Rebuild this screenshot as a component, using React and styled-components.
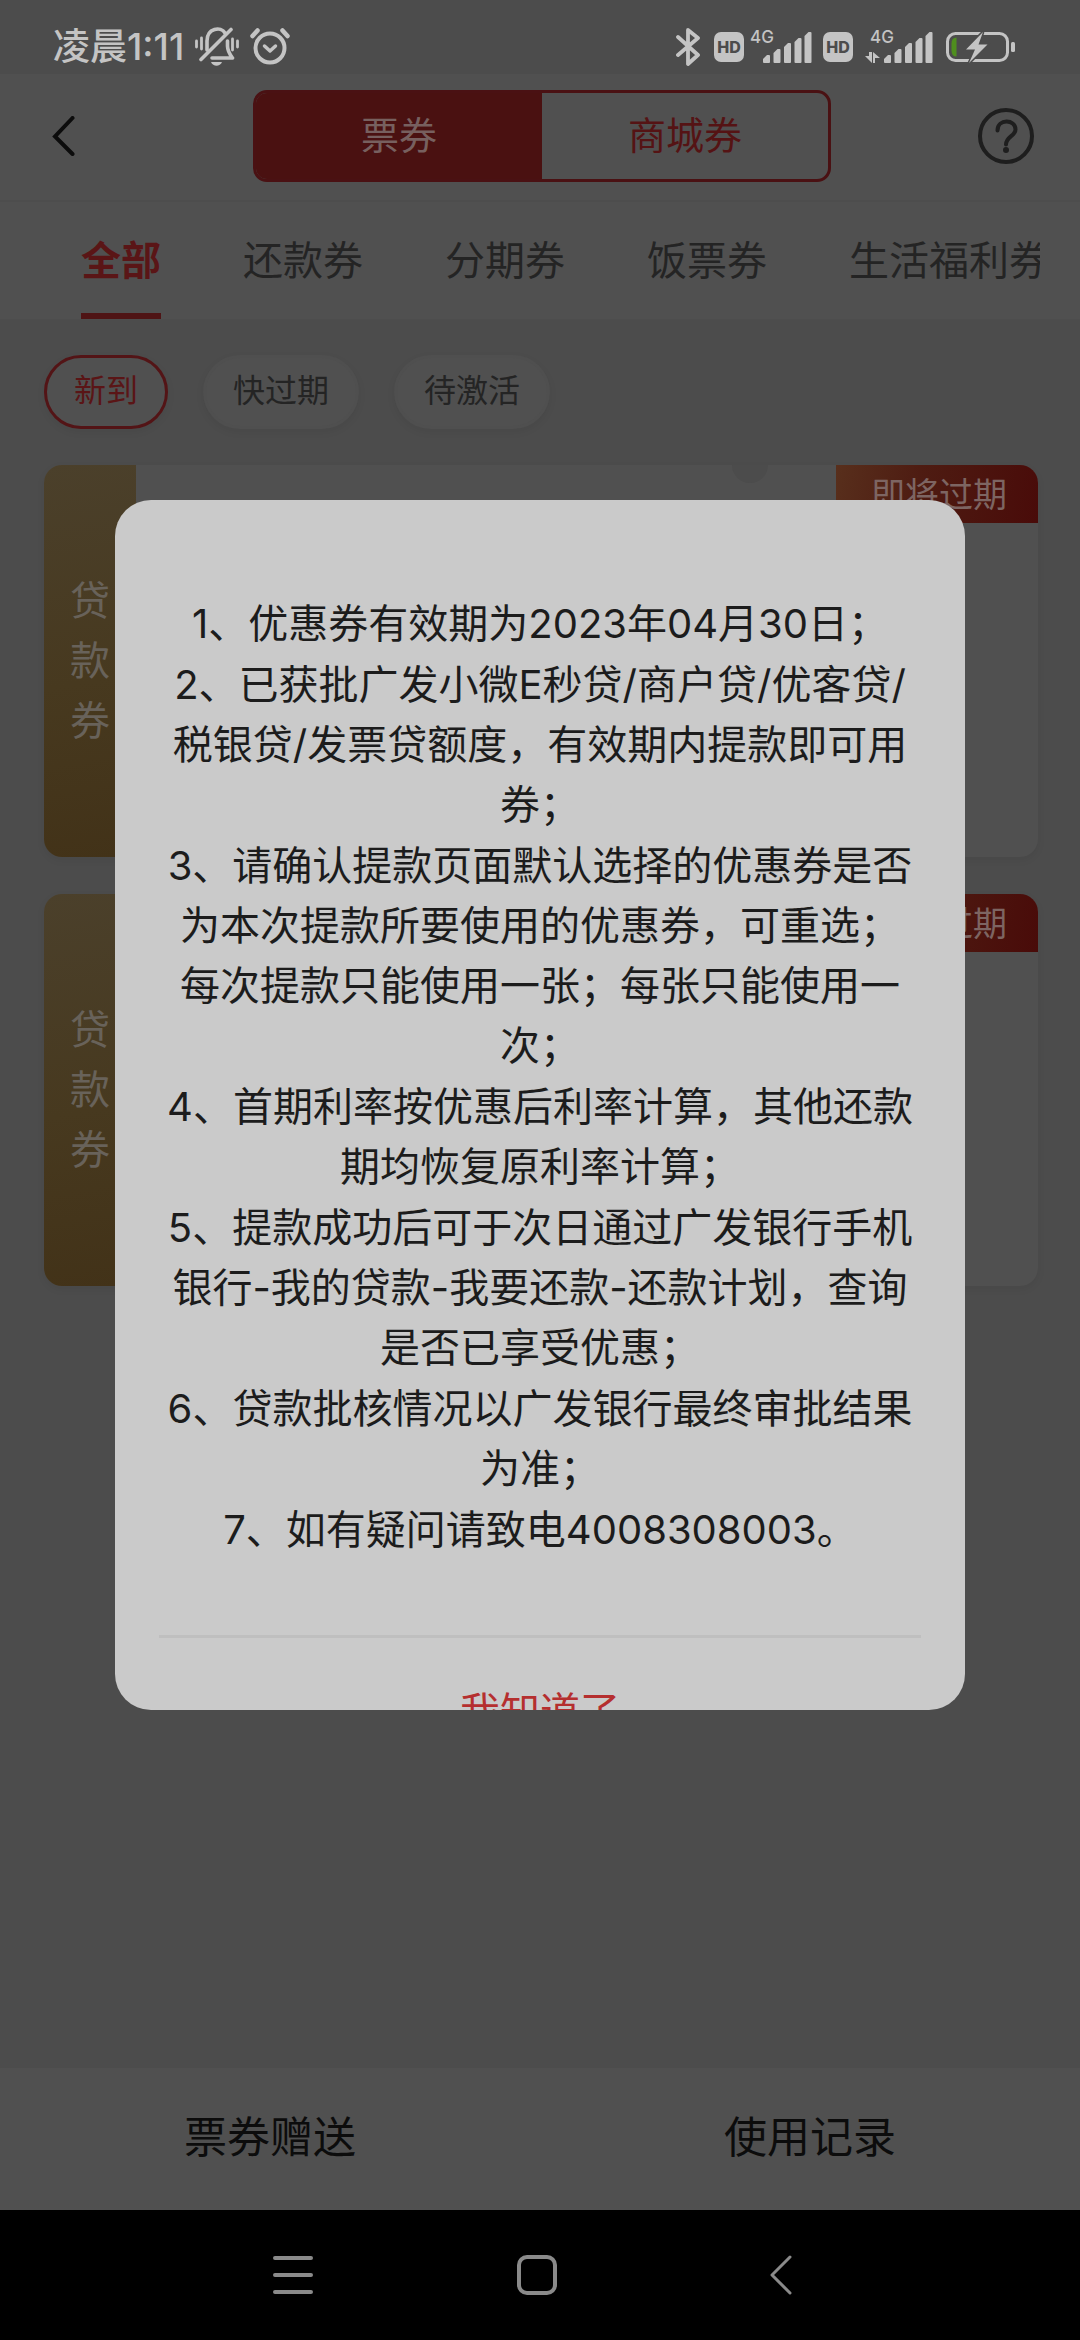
import React, { useState } from 'react';
import styled, { createGlobalStyle } from 'styled-components';

const GlobalStyle = createGlobalStyle`
  * {
    box-sizing: border-box;
  }

  html,
  body {
    margin: 0;
    background: #000;
  }

  body,
  button {
    font-family: Inter, 'Noto Sans CJK SC', sans-serif;
  }

  button {
    margin: 0;
    padding: 0;
    border: none;
    background: none;
    color: inherit;
    cursor: pointer;
  }

  svg {
    display: block;
    flex: none;
  }
`;

const Phone = styled.div`
  display: flex;
  flex-direction: column;
  min-height: 100vh;
`;

const Screen = styled.div`
  position: relative;
  flex: 1;
  display: flex;
  flex-direction: column;
  background: #4c4c4c;
`;

const StatusBar = styled.div`
  display: flex;
  align-items: center;
  justify-content: space-between;
  height: 74px;
  padding: 20px 64px 0 53px;
  color: #c4c4c4;
`;

const StatusGroup = styled.div`
  display: flex;
  align-items: center;
  gap: ${props => props.gap}px;
`;

const Clock = styled.span`
  font-size: 37px;
  font-weight: 500;
  line-height: 40px;
`;

const HdBadge = styled.span`
  width: 30px;
  height: 30px;
  border-radius: 7px;
  background: #c4c4c4;
  color: #4c4c4c;
  font-size: 16px;
  font-weight: 800;
  line-height: 30px;
  text-align: center;
`;

const Header = styled.header`
  display: flex;
  align-items: center;
  justify-content: space-between;
  height: 128px;
  padding: 0 44px 2px;
  background: #505050;
  border-bottom: 2px solid #4d4d4d;
`;

const IconButton = styled.button`
  display: flex;
  align-items: center;
  justify-content: ${props => props.$align || 'center'};
  width: ${props => props.$width || 60}px;
  height: 60px;
`;

const Segmented = styled.div`
  display: flex;
  width: 578px;
  height: 92px;
  border: 3px solid #4a1113;
  border-radius: 14px;
  overflow: hidden;
`;

const Segment = styled.button`
  flex: 1;
  padding-bottom: 8px;
  background: ${props => (props.$active ? '#4a1111' : 'transparent')};
  color: ${props => (props.$active ? '#77605f' : '#551314')};
  font-size: 38px;
`;

const TabBar = styled.nav`
  background: #505050;
  padding: 0 40px;
  border-bottom: 1px solid #4d4d4d;
`;

const TabScroller = styled.div`
  display: flex;
  gap: 82px;
  padding-left: 41px;
  overflow: hidden;
`;

const Tab = styled.button`
  flex: none;
  height: 117px;
  border-bottom: 6px solid ${props => (props.$active ? '#4f1415' : 'transparent')};
  color: ${props => (props.$active ? '#5a1516' : '#242424')};
  font-size: 40px;
  font-weight: ${props => (props.$active ? 700 : 400)};
  white-space: nowrap;
`;

const Filters = styled.div`
  display: flex;
  gap: 35px;
  padding: 35px 44px 36px;
`;

const Chip = styled.button`
  height: 74px;
  padding: 0 27px 8px;
  border: 3px solid ${props => (props.$active ? '#531416' : '#4f4f4f')};
  border-radius: 37px;
  background: #505050;
  box-shadow: 0 3px 8px rgba(0, 0, 0, 0.06);
  color: ${props => (props.$active ? '#5a1516' : '#242424')};
  font-size: 32px;
`;

const CouponList = styled.main`
  display: flex;
  flex-direction: column;
  gap: 37px;
  padding: 0 42px 0 44px;
`;

const Coupon = styled.article`
  position: relative;
  display: flex;
  justify-content: space-between;
  align-items: flex-start;
  height: 392px;
  border-radius: 18px;
  background: #505050;
  box-shadow: 0 3px 8px rgba(0, 0, 0, 0.06);
  overflow: hidden;
`;

const CouponKind = styled.div`
  display: flex;
  flex-direction: column;
  align-items: center;
  justify-content: center;
  width: 92px;
  height: 100%;
  background: linear-gradient(170deg, #4b402b, #47391f 55%, #423218);
  color: #68625a;
  font-size: 40px;
  line-height: 60px;
`;

const Notch = styled.span`
  position: absolute;
  top: -18px;
  right: 270px;
  width: 36px;
  height: 36px;
  border-radius: 50%;
  background: #4c4c4c;
`;

const Ribbon = styled.span`
  width: 202px;
  height: 58px;
  padding-left: 35px;
  background: linear-gradient(100deg, #582f1c, #4e1c12 40%, #490b09);
  color: #7d6562;
  font-size: 34px;
  line-height: 60px;
`;

const Footer = styled.footer`
  display: flex;
  margin-top: auto;
  height: 142px;
  background: #505050;
`;

const FooterButton = styled.button`
  flex: 1;
  padding-bottom: 10px;
  color: #0c0c0c;
  font-size: 43px;
`;

const Backdrop = styled.div`
  position: absolute;
  inset: 0;
  display: flex;
  align-items: center;
  justify-content: center;
`;

const Dialog = styled.div`
  width: 850px;
  max-width: 90%;
  max-height: 1210px;
  padding: 94px 44px 0;
  border-radius: 36px;
  background: #cacaca;
  overflow: hidden;
`;

const Terms = styled.div`
  display: flex;
  flex-direction: column;
  gap: 1px;
  padding: 0 4px 75px;
`;

const Term = styled.p`
  margin: 0;
  color: #1c1c1c;
  font-size: 40px;
  line-height: 60px;
  text-align: center;
`;

const DialogButton = styled.button`
  display: block;
  width: 100%;
  height: 144px;
  border-top: 3px solid #bfbfbf;
  color: #b52f2f;
  font-size: 40px;
`;

const NavBar = styled.div`
  display: flex;
  justify-content: center;
  height: 130px;
  padding-right: 6px;
  background: #000;
`;

const NavButton = styled.button`
  display: flex;
  align-items: center;
  justify-content: center;
  width: 244px;
`;

const TABS = ['全部', '还款券', '分期券', '饭票券', '生活福利券'];
const FILTERS = ['新到', '快过期', '待激活'];
const COUPONS = [1, 2];
const TERMS = [
  '1、优惠券有效期为2023年04月30日；',
  '2、已获批广发小微E秒贷/商户贷/优客贷/税银贷/发票贷额度，有效期内提款即可用券；',
  '3、请确认提款页面默认选择的优惠券是否为本次提款所要使用的优惠券，可重选；每次提款只能使用一张；每张只能使用一次；',
  '4、首期利率按优惠后利率计算，其他还款期均恢复原利率计算；',
  '5、提款成功后可于次日通过广发银行手机银行-我的贷款-我要还款-还款计划，查询是否已享受优惠；',
  '6、贷款批核情况以广发银行最终审批结果为准；',
  '7、如有疑问请致电4008308003。',
];

const MutedBell = () => (
  <svg width="46" height="40" viewBox="0 0 46 40" fill="none" stroke="#c4c4c4" strokeWidth="3.6" strokeLinecap="round">
    <path d="M2.5 14v6M7.5 11v11M38.5 12v11M43.5 14v6" strokeWidth="2.8" />
    <path d="M13 23V14C13 1 27 -1 31 6M33.5 14v5c0 5 2 8 5 12H18" strokeLinejoin="round" />
    <path d="M37 2.5L7 32.5" />
    <path d="M17 35h11c-2 5-9 5-11 0z" fill="#c4c4c4" stroke="none" />
  </svg>
);

const AlarmClock = () => (
  <svg width="40" height="40" viewBox="0 0 40 40" fill="none" stroke="#c4c4c4" strokeWidth="4" strokeLinecap="round">
    <circle cx="20" cy="21" r="14.5" />
    <path d="M14.5 19l5.5 5 5.5-5" strokeWidth="3.5" strokeLinejoin="round" />
    <path d="M2.5 9l5-5.5M37.5 9l-5-5.5" strokeWidth="4.5" />
  </svg>
);

const Bluetooth = () => (
  <svg width="32" height="40" viewBox="0 0 32 40" fill="none" stroke="#c4c4c4" strokeWidth="3.8" strokeLinejoin="round" strokeLinecap="round">
    <path d="M2 10L22 28L12 37V3L22 11L2 28" />
  </svg>
);

const BARS = [[0, 23], [10.5, 17], [21, 11], [31.5, 6], [41.5, 0]];

const Signal = ({ data }) => {
  const x = data ? 25 : 13;
  return (
    <svg width={data ? 81 : 67} height="40" viewBox={data ? '0 -2 81 40' : '0 -2 67 40'} fill="#c4c4c4">
      <text x={data ? 11 : 0} y="14" fontFamily="Inter, sans-serif" fontSize="17" fontWeight="500">4G</text>
      {BARS.map(([dx, y]) => (
        <path key={dx} d={`M${x + dx} 33V${y + 7}l4-4h2q1 0 1 1V33q0 1-1 1h-5q-1 0-1-1z`} />
      ))}
      {data && <path d="M10 23h3v11l-7-7h4zM16 34h-2V23l7 6h-5z" />}
    </svg>
  );
};

const Battery = () => (
  <svg width="70" height="32" viewBox="0 0 70 32">
    <rect x="1.5" y="2.5" width="60" height="27" rx="8" fill="none" stroke="#c4c4c4" strokeWidth="3" />
    <rect x="65" y="11" width="4" height="10" rx="1.5" fill="#c4c4c4" />
    <path d="M10.5 6.5v19q-5 0-5-6v-7q0-6 5-6z" fill="#4f8f1e" />
    <path d="M37 1L20 18.5h9L23 32l18.5-18.5H32.5z" fill="#c4c4c4" stroke="#4c4c4c" strokeWidth="3" paintOrder="stroke" />
  </svg>
);

export default function App() {
  const [tab, setTab] = useState(TABS[0]);
  const [filter, setFilter] = useState(FILTERS[0]);
  const [open, setOpen] = useState(true);

  return (
    <Phone>
      <GlobalStyle />
      <Screen>
        <StatusBar>
          <StatusGroup gap={10}>
            <Clock>凌晨1:11</Clock>
            <MutedBell />
            <AlarmClock />
          </StatusGroup>
          <StatusGroup gap={6}>
            <Bluetooth />
            <HdBadge>HD</HdBadge>
            <Signal />
            <HdBadge>HD</HdBadge>
            <Signal data />
            <Battery />
          </StatusGroup>
        </StatusBar>

        <Header>
          <IconButton aria-label="返回" $width={64} $align="flex-start">
            <svg width="40" height="40" viewBox="0 0 40 40" fill="none" stroke="#0c0c0c" strokeWidth="4">
              <path d="M28.5 2L11 20.5L28.5 38" strokeLinecap="round" />
            </svg>
          </IconButton>
          <Segmented>
            <Segment $active>票券</Segment>
            <Segment>商城券</Segment>
          </Segmented>
          <IconButton aria-label="帮助">
            <svg width="60" height="60" viewBox="0 0 60 60" fill="none" stroke="#1e1e1e" strokeWidth="4">
              <circle cx="30" cy="30" r="26" />
              <path d="M21.5 24.5c0-12 18-11.5 18-1 0 6.5-9.5 7-9.5 15" strokeLinecap="round" />
              <circle cx="30" cy="44" r="3" fill="#1e1e1e" stroke="none" />
            </svg>
          </IconButton>
        </Header>

        <TabBar>
          <TabScroller>
            {TABS.map(name => (
              <Tab key={name} $active={name === tab} onClick={() => setTab(name)}>{name}</Tab>
            ))}
          </TabScroller>
        </TabBar>

        <Filters>
          {FILTERS.map(name => (
            <Chip key={name} $active={name === filter} onClick={() => setFilter(name)}>{name}</Chip>
          ))}
        </Filters>

        <CouponList>
          {COUPONS.map(id => (
            <Coupon key={id}>
              <CouponKind>
                <span>贷</span>
                <span>款</span>
                <span>券</span>
              </CouponKind>
              <Notch />
              <Ribbon>即将过期</Ribbon>
            </Coupon>
          ))}
        </CouponList>

        <Footer>
          <FooterButton>票券赠送</FooterButton>
          <FooterButton>使用记录</FooterButton>
        </Footer>

        {open && (
          <Backdrop>
            <Dialog role="dialog" aria-modal="true">
              <Terms>
                {TERMS.map(text => (
                  <Term key={text}>{text}</Term>
                ))}
              </Terms>
              <DialogButton onClick={() => setOpen(false)}>我知道了</DialogButton>
            </Dialog>
          </Backdrop>
        )}
      </Screen>

      <NavBar>
        <NavButton aria-label="最近任务">
          <svg width="40" height="40" viewBox="0 0 40 40" stroke="#8a8a8a" strokeWidth="4" strokeLinecap="round">
            <path d="M2 3h36M2 20h36M2 37h36" />
          </svg>
        </NavButton>
        <NavButton aria-label="主屏幕">
          <svg width="40" height="40" viewBox="0 0 40 40" fill="none" stroke="#8a8a8a" strokeWidth="4">
            <rect x="2" y="2" width="36" height="36" rx="8" />
          </svg>
        </NavButton>
        <NavButton aria-label="返回上一页">
          <svg width="40" height="40" viewBox="0 0 40 40" fill="none" stroke="#8a8a8a" strokeWidth="3">
            <path d="M29 2L11 20L29 38" strokeLinecap="round" strokeLinejoin="round" />
          </svg>
        </NavButton>
      </NavBar>
    </Phone>
  );
}
